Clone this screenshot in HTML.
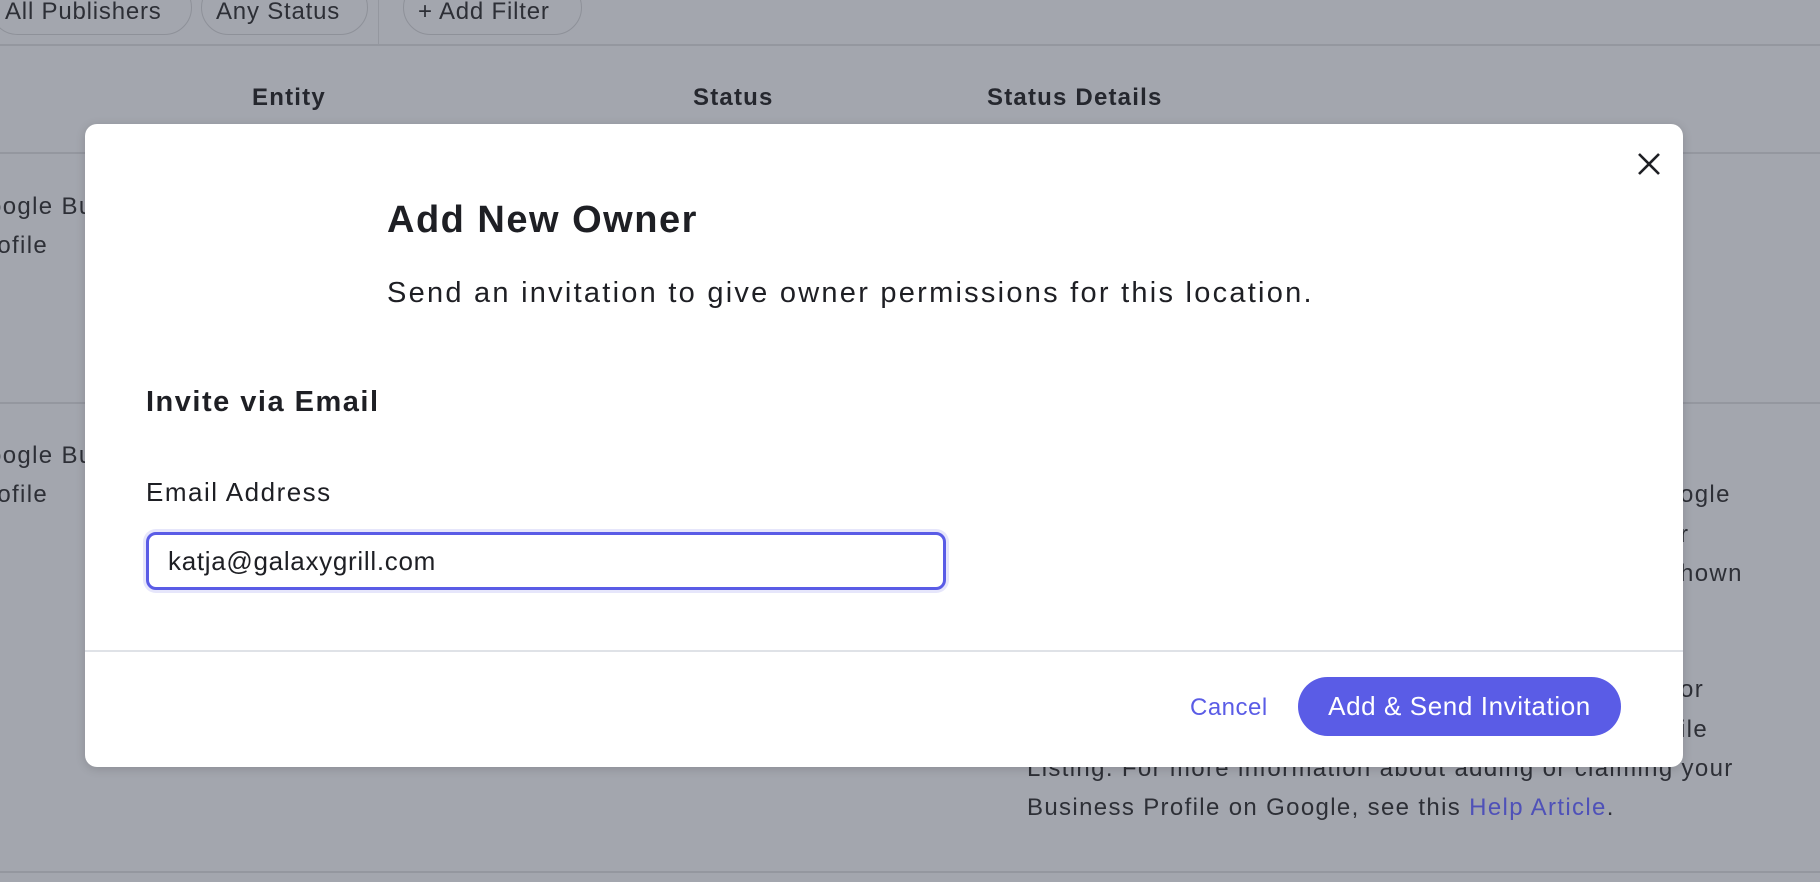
<!DOCTYPE html>
<html><head><meta charset="utf-8"><style>
*{margin:0;padding:0;box-sizing:border-box}
body{width:1820px;height:882px;overflow:hidden;background:#a3a6ae;font-family:"Liberation Sans",sans-serif;color:#25272e;position:relative}
.a{position:absolute;white-space:nowrap}
.pill{position:absolute;top:-20px;height:55px;border:1.5px solid #8e9199;border-radius:28px;font-size:24px;letter-spacing:.8px;line-height:62px;padding:0 14px;color:#2d2f36}
.hl{position:absolute;left:0;width:1820px;height:2px;background:#94979f}
.th{font-weight:bold;font-size:24px;letter-spacing:1.2px;top:84px}
.bt{font-size:24px;letter-spacing:1.35px;color:#2d2f36}
.modal{position:absolute;left:85px;top:124px;width:1598px;height:643px;background:#fff;border-radius:12px;box-shadow:0 2px 10px rgba(0,0,0,.15)}
</style></head><body>
<div class="pill" style="left:-10px;width:202px">All Publishers</div>
<div class="pill" style="left:201px;width:167px">Any Status</div>
<div style="position:absolute;left:378px;top:0;width:1px;height:44px;background:#94979f"></div>
<div class="pill" style="left:403px;width:179px">+ Add Filter</div>
<div class="hl" style="top:44px"></div>
<div class="a th" style="left:252px">Entity</div>
<div class="a th" style="left:693px">Status</div>
<div class="a th" style="left:987px">Status Details</div>
<div class="hl" style="top:152px"></div>
<div class="a bt" style="left:-12px;top:193px">oogle Bu</div>
<div class="a bt" style="left:-12px;top:232px">rofile</div>
<div class="hl" style="top:402px"></div>
<div class="a bt" style="left:-12px;top:442px">oogle Bu</div>
<div class="a bt" style="left:-12px;top:481px">rofile</div>
<div class="a bt" style="left:1680px;top:481px">ogle</div>
<div class="a bt" style="left:1680px;top:521px">r</div>
<div class="a bt" style="left:1680px;top:560px">hown</div>
<div class="a bt" style="left:1680px;top:676px">or</div>
<div class="a bt" style="left:1680px;top:716px">ile</div>
<div class="a bt" style="left:1027px;top:755px">Listing. For more information about adding or claiming your</div>
<div class="a bt" style="left:1027px;top:794px">Business Profile on Google, see this <span style="color:#4f51b8">Help Article</span>.</div>
<div class="hl" style="top:871px"></div>
<div class="modal">
<svg class="a" style="left:1552px;top:28px" width="24" height="24" viewBox="0 0 24 24"><path d="M2 2L22 22M22 2L2 22" stroke="#1e1f24" stroke-width="2.6"/></svg>
<div class="a" style="left:302px;top:75px;font-size:38px;letter-spacing:1.5px;font-weight:bold;color:#1e1f24">Add New Owner</div>
<div class="a" style="left:302px;top:153px;font-size:29px;letter-spacing:2.25px;color:#1e1f24">Send an invitation to give owner permissions for this location.</div>
<div class="a" style="left:61px;top:262px;font-size:29px;letter-spacing:1.5px;font-weight:bold;color:#1e1f24">Invite via Email</div>
<div class="a" style="left:61px;top:353px;font-size:26px;letter-spacing:1.5px;color:#1e1f24">Email Address</div>
<div class="a" style="left:61px;top:408px;width:800px;height:58px;border:3px solid #5a5ce6;border-radius:10px;box-shadow:0 0 0 3px #e6e6fb;font-size:26px;letter-spacing:.7px;line-height:52px;padding-left:19px;color:#1e1f24">katja@galaxygrill.com</div>
<div class="a" style="left:0;top:526px;width:1598px;height:2px;background:#dfe2e7"></div>
<div class="a" style="left:1105px;top:570px;font-size:24px;letter-spacing:.5px;color:#5a5ce6">Cancel</div>
<div class="a" style="left:1213px;top:553px;width:323px;height:59px;border-radius:30px;background:#5a5ce6;color:#fff;font-size:26px;letter-spacing:.6px;line-height:59px;text-align:center">Add &amp; Send Invitation</div>
</div>
</body></html>
